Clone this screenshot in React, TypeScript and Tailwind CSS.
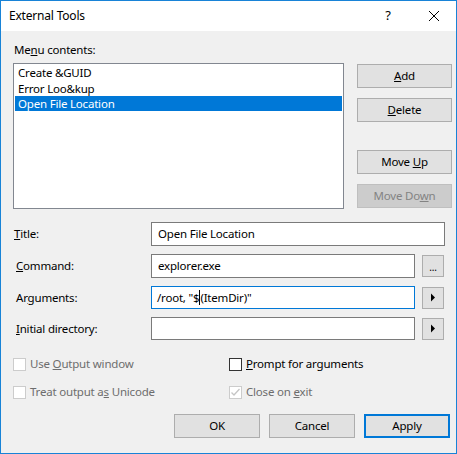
import React from "react";

const font = { fontFamily: '"Segoe UI", "Noto Sans", "Liberation Sans", sans-serif', letterSpacing: "-0.2px" };

function Btn({ children, w = "w-[95px]", disabled = false, def = false }: { children: React.ReactNode; w?: string; disabled?: boolean; def?: boolean }) {
  return (
    <div
      className={`${w} h-[24px] flex items-center justify-center text-[11.5px] ${
        disabled
          ? "bg-[#cccccc] border border-[#bfbfbf] text-[#838383]"
          : def
          ? "bg-[#e1e1e1] border-2 border-[#0078d7] text-black"
          : "bg-[#e1e1e1] border border-[#adadad] text-black"
      }`}
    >
      <span>{children}</span>
    </div>
  );
}

function Arrow() {
  return (
    <div className="w-[22px] h-[22px] bg-[#e1e1e1] border border-[#adadad] flex items-center justify-center">
      <svg width="6" height="9" viewBox="0 0 6 9">
        <path d="M1 0.5 L5 4.5 L1 8.5 Z" fill="#000" />
      </svg>
    </div>
  );
}

function Check({ disabled, checked }: { disabled?: boolean; checked?: boolean }) {
  return (
    <div className={`w-[13px] h-[13px] border bg-white flex items-center justify-center shrink-0 ${disabled ? "border-[#cccccc]" : "border-[#333333]"}`}>
      {checked && (
        <svg width="11" height="11" viewBox="0 0 11 11">
          <path d="M1.5 5.5 L4 8 L9.5 2" stroke="#c5c5c5" strokeWidth="1.3" fill="none" />
        </svg>
      )}
    </div>
  );
}

export default function App() {
  return (
    <div className="w-[457px] h-[454px] border border-[#1883d7] bg-[#f0f0f0] flex flex-col text-black text-[11.5px]" style={font}>
      <div className="h-[30px] bg-white flex items-center shrink-0">
        <div className="pl-[8px] text-[12px] flex-1">External Tools</div>
        <div className="w-[46px] h-full flex items-center justify-center text-[13px]">?</div>
        <div className="w-[45px] h-full flex items-center justify-center">
          <svg width="12" height="12" viewBox="0 0 12 12">
            <path d="M1 1 L11 11 M11 1 L1 11" stroke="#000" strokeWidth="1" />
          </svg>
        </div>
      </div>
      <div className="flex-1 flex flex-col pl-[12px]">
        <div className="mt-[11px] h-[16px] leading-[16px] pl-[1px]">
          Me<u>n</u>u contents:
        </div>
        <div className="mt-[5px] flex">
          <div className="w-[331px] h-[146px] bg-white border border-[#828790] p-[1px]">
            <div className="h-[16px] leading-[15px] pl-[3px]">Create &amp;GUID</div>
            <div className="h-[15px] leading-[15px] pl-[3px]">Error Loo&amp;kup</div>
            <div className="h-[15px] leading-[15px] pl-[3px] bg-[#0078d7] text-white">Open File Location</div>
          </div>
          <div className="ml-[13px] pt-[1px] flex flex-col">
            <Btn><u>A</u>dd</Btn>
            <div className="mt-[10px]"><Btn><u>D</u>elete</Btn></div>
            <div className="mt-[28px]"><Btn>Move <u>U</u>p</Btn></div>
            <div className="mt-[10px]"><Btn disabled>Move Do<u>w</u>n</Btn></div>
          </div>
        </div>
        <div className="mt-[13px] flex items-center">
          <div className="w-[138px] pl-[1px]"><u>T</u>itle:</div>
          <div className="w-[294px] h-[24px] bg-white border border-[#7a7a7a] flex items-center pl-[6px]">Open File Location</div>
        </div>
        <div className="mt-[8px] flex items-center">
          <div className="w-[138px] pl-[3px]"><u>C</u>ommand:</div>
          <div className="w-[264px] h-[24px] bg-white border border-[#7a7a7a] flex items-center pl-[6px]">explorer.exe</div>
          <div className="ml-[7px]">
            <div className="w-[22px] h-[22px] bg-[#e1e1e1] border border-[#adadad] flex items-end justify-center pb-[4px] text-[10px] leading-[10px]">...</div>
          </div>
        </div>
        <div className="mt-[8px] flex items-center">
          <div className="w-[138px] pl-[3px]">Ar<u>g</u>uments:</div>
          <div className="w-[264px] h-[23px] bg-white border border-[#0078d7] flex items-center pl-[5px]">
            <span>/root, "$</span>
            <span className="inline-block w-[1px] h-[15px] bg-black" />
            <span>(ItemDir)"</span>
          </div>
          <div className="ml-[7px]"><Arrow /></div>
        </div>
        <div className="mt-[8px] flex items-center">
          <div className="w-[138px] pl-[3px]"><u>I</u>nitial directory:</div>
          <div className="w-[264px] h-[23px] bg-white border border-[#7a7a7a]" />
          <div className="ml-[7px]"><Arrow /></div>
        </div>
        <div className="mt-[17px] flex items-center h-[14px]">
          <div className="w-[216px] flex items-center gap-[4px] text-[#6d6d6d]">
            <Check disabled />
            <span>Use <u>O</u>utput window</span>
          </div>
          <div className="flex items-center gap-[4px]">
            <Check />
            <span><u>P</u>rompt for arguments</span>
          </div>
        </div>
        <div className="mt-[14px] flex items-center h-[14px]">
          <div className="w-[216px] flex items-center gap-[4px] text-[#6d6d6d]">
            <Check disabled />
            <span>Treat output a<u>s</u> Unicode</span>
          </div>
          <div className="flex items-center gap-[4px] text-[#6d6d6d]">
            <Check disabled checked />
            <span>Close on <u>e</u>xit</span>
          </div>
        </div>
        <div className="mt-[15px] flex pl-[161px] gap-[9px]">
          <Btn w="w-[86px]">OK</Btn>
          <Btn w="w-[86px]">Cancel</Btn>
          <Btn w="w-[86px]" def>Apply</Btn>
        </div>
      </div>
    </div>
  );
}
